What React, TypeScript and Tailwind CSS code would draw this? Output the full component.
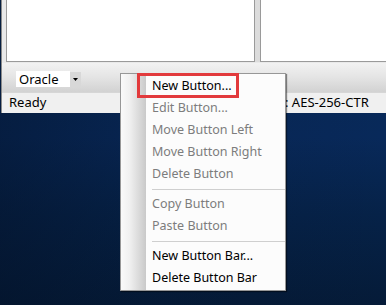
import React from "react";

const font = { fontFamily: '"Noto Sans", "Noto Sans CJK SC", sans-serif' };

function Item({ label, disabled }: { label: string; disabled?: boolean }) {
  return (
    <div
      className={`h-[22px] flex items-center pl-[31px] text-[12.5px] leading-none ${
        disabled ? "text-[#7d7d7d]" : "text-black"
      }`}
    >
      {label}
    </div>
  );
}

function Sep() {
  return (
    <div className="h-[8px] flex items-center pl-[31px]">
      <div className="h-px w-full bg-[#cfcfcf]" />
    </div>
  );
}

export default function App() {
  return (
    <div
      className="relative w-[386px] h-[305px] overflow-hidden bg-[linear-gradient(180deg,#082a55_0%,#08295a_45%,#062248_70%,#051b38_100%)]"
      style={font}
    >
      <div className="absolute inset-0 bg-[linear-gradient(90deg,rgba(3,15,35,0.45)_0%,rgba(3,15,35,0.15)_40%,rgba(0,0,0,0)_100%)]" />
      {/* Window */}
      <div className="relative ml-[1px] h-[113px] bg-[#e9e9e9] border-l-[1px] border-[#8a8a8a] flex flex-col">
        {/* panels */}
        <div className="flex h-[63px] pl-[4px]">
          <div className="w-[249px] h-[62px] bg-white border-l border-b border-r border-[#9a9a9a]" />
          <div className="w-[5px] h-[62px] bg-[#dcdcdc]" />
          <div className="flex-1 h-[62px] bg-white border-l border-b border-[#9a9a9a]" />
        </div>
        {/* toolbar */}
        <div className="h-[29px] bg-[linear-gradient(180deg,#f2f2f2_0%,#e4e4e4_50%,#d2d2d2_100%)] flex items-start pt-[8px] pl-[14px]">
          <div className="flex h-[16px]">
            <div className="w-[54px] h-[16px] bg-white text-[13px] leading-[16px] pl-[3px] text-black">
              Oracle
            </div>
            <div className="w-[11px] h-[15px] mt-[1px] bg-[#d8d8d8] flex items-center justify-center">
              <svg width="6" height="4" viewBox="0 0 6 4">
                <path d="M0 0 H5 L2.5 3 Z" fill="#000" />
              </svg>
            </div>
          </div>
        </div>
        {/* status bar */}
        <div className="flex-1 bg-[#f0f0f0] border-t border-[#d6d6d6] flex items-center text-[13px] text-black relative">
          <span className="pl-[7px]">Ready</span>
          <span className="absolute left-[283px]">: AES-256-CTR</span>
        </div>
      </div>

      {/* Context menu */}
      <div className="absolute left-[120px] top-[73px] w-[166px] bg-[#fcfcfc] border border-[#979797] shadow-[1px_1px_1px_rgba(0,0,0,0.45)] py-[1px]">
        <div className="absolute left-0 top-0 bottom-0 w-[25px] bg-[linear-gradient(90deg,#fafafa_0%,#f0f0f0_35%,#c9c9c9_100%)]" />
        <div className="relative">
          <Item label="New Button..." />
          <Item label="Edit Button..." disabled />
          <Item label="Move Button Left" disabled />
          <Item label="Move Button Right" disabled />
          <Item label="Delete Button" disabled />
          <Sep />
          <Item label="Copy Button" disabled />
          <Item label="Paste Button" disabled />
          <Sep />
          <Item label="New Button Bar..." />
          <Item label="Delete Button Bar" />
        </div>
        {/* red highlight box */}
        <div className="absolute left-[16px] top-[-1px] w-[102px] h-[25px] border-[3px] border-[#e23a3c]" />
      </div>
    </div>
  );
}
